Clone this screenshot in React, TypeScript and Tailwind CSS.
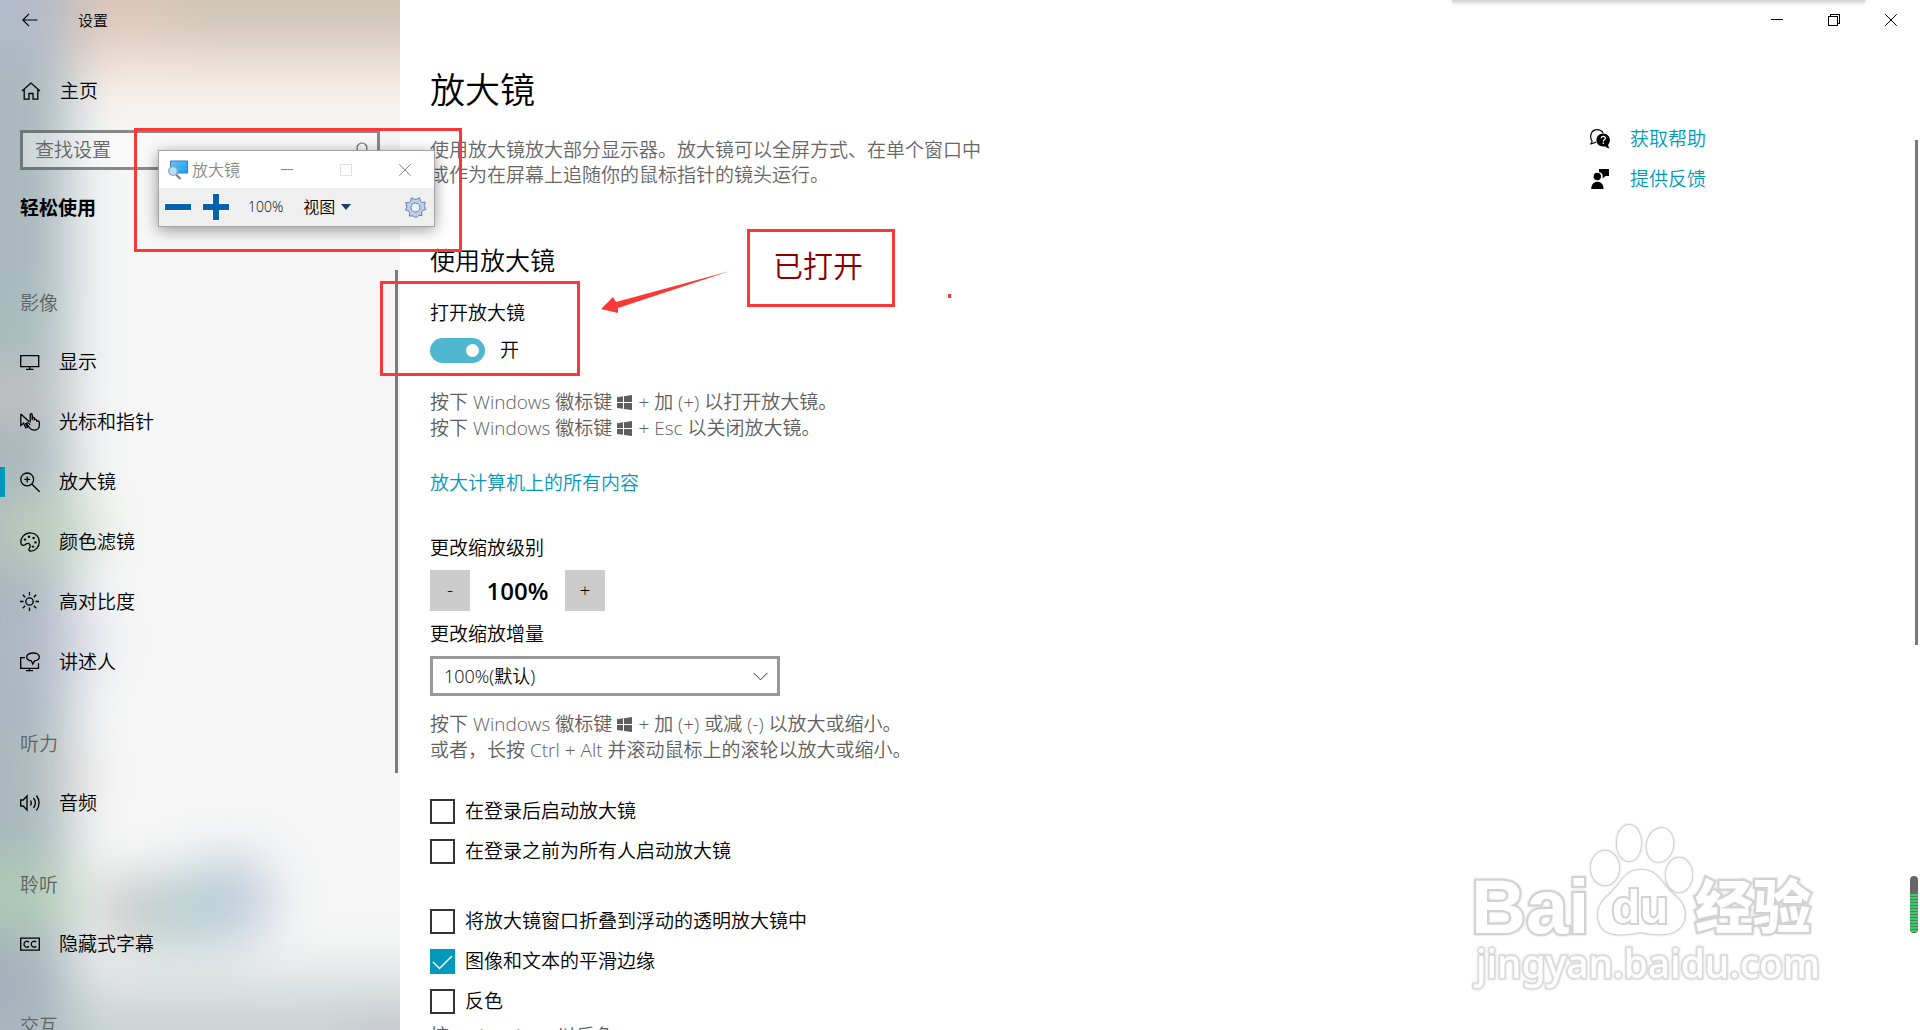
import { useState, type ReactNode } from "react";

type NavItem = { label: string; icon: ReactNode; active?: boolean };
type NavGroup = { title: string; items: NavItem[] };

const LINE = {
  width: 20,
  height: 20,
  viewBox: "0 0 20 20",
  fill: "none",
  stroke: "currentColor",
  strokeWidth: 1.3,
} as const;

const NAV: NavGroup[] = [
  {
    title: "影像",
    items: [
      {
        label: "显示",
        icon: (
          <svg {...LINE}>
            <path d="M.7 3.7h18v11H.7zM6 17.4h7.5M9.700 14.700v2.700" />
          </svg>
        ),
      },
      {
        label: "光标和指针",
        icon: (
          <svg {...LINE}>
            <path d="M.8 2v11.500l2.700-2.400 2.200 4.400M.8 2l8.400 7.800M3.500 11l2.500 4.800 1.500-.8-2-4" />
            <path d="M10.200 10.500V2.800c0-1.400 2-1.400 2 0v5.400M12.200 5.500c1.700-.5 2.200.3 2.200 1v2c0-1.700 2.400-1.500 2.400.3v1c.3-1.500 2.500-1.200 2.500.5v3.200c0 2.700-2.200 4.700-5 4.700-2.700 0-4-1.200-5-2.700l-3-4c1.200-1.400 2.500-.3 3.900 1.200" />
          </svg>
        ),
      },
      {
        label: "放大镜",
        active: true,
        icon: (
          <svg {...LINE}>
            <circle cx="7.200" cy="7.400" r="6.400" />
            <path d="M11.800 12l8 8M7.200 4.400v6M4.200 7.400h6" />
          </svg>
        ),
      },
      {
        label: "颜色滤镜",
        icon: (
          <svg {...LINE}>
            <path d="M10.300.8c5.200 0 9 3.900 9 8.900 0 5.200-3.900 9.500-8.400 9.500-2.200 0-2.400-1.400-1.600-2.700.9-1.500 1.500-2.800.4-4.200-1.300-1.600-2.800-.9-4.200.1-1.800 1.400-4.300 1.500-4.600-1.500C.4 5.500 4.800.8 10.300.8z" />
            <g fill="currentColor" stroke="none">
              <circle cx="5" cy="7.600" r="1.200" />
              <circle cx="9" cy="4.700" r="1.200" />
              <circle cx="13.600" cy="6" r="1.200" />
              <circle cx="15.500" cy="10.400" r="1.200" />
              <circle cx="13" cy="14.600" r="1.200" />
            </g>
          </svg>
        ),
      },
      {
        label: "高对比度",
        icon: (
          <svg {...LINE}>
            <circle cx="9.500" cy="9.500" r="3.700" />
            <path d="M9.500 0v3.500M9.500 15.500V19M0 9.500h3.500M15.500 9.500H19M2.800 2.800l2.400 2.400M13.800 13.800l2.400 2.400M2.800 16.200l2.400-2.400M13.800 5.200l2.400-2.400" />
          </svg>
        ),
      },
      {
        label: "讲述人",
        icon: (
          <svg {...LINE}>
            <path d="M5 5.700H.7v10.600h17.800v-5M6 18.600h7M9.500 16.300v2.300" />
            <path d="M13 1c3.700 0 6.300 1.700 6.300 4 0 2-2 3.500-4.800 3.900L12.800 12l-1.500-3.200C8.500 8.400 6.700 7 6.700 5c0-2.300 2.600-4 6.300-4z" />
          </svg>
        ),
      },
    ],
  },
  {
    title: "听力",
    items: [
      {
        label: "音频",
        icon: (
          <svg {...LINE}>
            <path d="M.7 7v6h2.500l3.800 4V3L3.200 7zM10.500 7.500c1 1.500 1 3.500 0 5M13.500 5c2.300 3 2.300 7 0 10M16.400 2.500c3.600 4.500 3.600 10.500 0 15" />
          </svg>
        ),
      },
    ],
  },
  {
    title: "聆听",
    items: [
      {
        label: "隐藏式字幕",
        icon: (
          <svg {...LINE}>
            <path d="M.7 4.200h18.600v12H.7z" />
            <path d="M9 8c-2.400-1.600-5-.5-5 2.200s2.600 3.800 5 2.200M16.300 8c-2.400-1.600-5-.5-5 2.200s2.600 3.800 5 2.200" />
          </svg>
        ),
      },
    ],
  },
  { title: "交互", items: [] },
];

function TitleButton({
  label,
  width = "w-[57px]",
  children,
}: {
  label: string;
  width?: string;
  children: ReactNode;
}) {
  return (
    <button type="button" aria-label={label} className={`flex h-10 items-center justify-center ${width}`}>
      <svg width="12" height="12" viewBox="0 0 12 12" fill="none" stroke="currentColor" shapeRendering="crispEdges">
        {children}
      </svg>
    </button>
  );
}

function WinKey() {
  return (
    <svg
      width="15"
      height="15"
      viewBox="0 0 15 15"
      fill="currentColor"
      className="mr-[6px] ml-[5px] inline-block align-[-1px]"
      aria-label="Windows"
    >
      <path d="M0 2.200l6-.9v5.800H0zM7 1.200L15 0v7.100H7zM0 8h6v5.800l-6-.9zM7 8h8v7.100l-8-1.200z" />
    </svg>
  );
}

// Blurred wallpaper showing through the side pane
function PaneBackdrop() {
  return (
    <svg
      className="pointer-events-none absolute inset-0 -z-10 size-full"
      viewBox="0 0 400 1030"
      preserveAspectRatio="none"
      aria-hidden="true"
    >
      <defs>
        <filter
          id="acrylic"
          filterUnits="userSpaceOnUse"
          x="-150"
          y="-150"
          width="700"
          height="1330"
          colorInterpolationFilters="sRGB"
        >
          <feGaussianBlur stdDeviation="26" />
        </filter>
      </defs>
      <rect width="400" height="1030" fill="#f6f6f6" />
      <g filter="url(#acrylic)">
        <rect x="-150" y="-150" width="700" height="1330" fill="#f6f6f6" />
        <rect x="-150" y="-150" width="700" height="240" fill="#f3e4da" />
        <rect x="-150" y="-150" width="700" height="195" fill="#cec5b7" />
        <rect x="-150" y="965" width="700" height="220" fill="#dde3e2" />
        <rect x="-150" y="1005" width="700" height="200" fill="#c9d2d1" />
        <rect x="340" y="1005" width="210" height="200" fill="#c4c8cd" />
        <rect x="80" y="-150" width="90" height="195" fill="#dcc5ba" />
        <rect x="-150" y="-150" width="218" height="1330" fill="#a8b8bd" />
        <rect x="-150" y="-150" width="220" height="210" fill="#b3bac9" />
        <ellipse cx="20" cy="325" rx="40" ry="25" fill="#a9bfbd" />
        <ellipse cx="0" cy="395" rx="60" ry="26" fill="#c6c0c0" />
        <ellipse cx="42" cy="530" rx="55" ry="34" fill="#bccfbc" />
        <rect x="-150" y="595" width="214" height="125" fill="#adb6c3" />
        <ellipse cx="75" cy="640" rx="22" ry="42" fill="#d3d6e2" />
        <ellipse cx="60" cy="775" rx="28" ry="20" fill="#cfc9c6" />
        <ellipse cx="15" cy="893" rx="60" ry="38" fill="#aecbb4" />
        <rect x="-150" y="950" width="206" height="60" fill="#a3b0bb" />
        <ellipse cx="145" cy="910" rx="50" ry="34" fill="#c3c5c5" />
        <ellipse cx="230" cy="900" rx="44" ry="44" fill="#c0cbda" />
        <ellipse cx="192" cy="910" rx="28" ry="38" fill="#b0cfd0" />
      </g>
    </svg>
  );
}

function Sidebar() {
  return (
    <aside className="relative isolate flex w-[400px] shrink-0 flex-col overflow-hidden">
      <PaneBackdrop />
      <div className="flex h-10 shrink-0 items-center pl-[22px]">
        <button type="button" aria-label="返回">
          <svg width="16" height="14" viewBox="0 0 16 14" fill="none" stroke="currentColor" strokeWidth="1.200">
            <path d="M15.500 7H1M7 .8L.8 7 7 13.200" />
          </svg>
        </button>
        <span className="ml-10 text-[15px]">设置</span>
      </div>

      <a href="#home" className="mt-[21px] flex h-[60px] shrink-0 items-center pl-[21px]">
        <svg {...LINE}>
          <path d="M1 10l9-8 9 8M3.200 8.500v9.700H8v-5.700h4v5.700h4.800V8.500" />
        </svg>
        <span className="ml-[19px]">主页</span>
      </a>

      <label className="mx-5 mt-[9px] flex h-10 shrink-0 items-center border-3 border-black/45 bg-white/40 pr-2 pl-3">
        <input
          type="text"
          aria-label="查找设置"
          placeholder="查找设置"
          className="min-w-0 flex-1 bg-transparent outline-none placeholder:text-[#666]"
        />
        <svg width="16" height="16" viewBox="0 0 16 16" fill="none" stroke="#666" strokeWidth="1.200">
          <circle cx="9" cy="6" r="5" />
          <path d="M5.500 9.500L1 14" />
        </svg>
      </label>

      <h2 className="mt-[25px] mb-[30px] pl-5 leading-[26px] font-bold">轻松使用</h2>

      <nav>
        {NAV.map((group) => (
          <section key={group.title}>
            <h3 className="pt-10 pb-[17px] pl-5 leading-6 text-[#5c6464]">{group.title}</h3>
            {group.items.map((item) => (
              <a key={item.label} href="#section" className="flex h-[60px] items-center">
                <span className={`h-[30px] w-[5px] ${item.active ? "bg-[#0099bc]" : ""}`} />
                <span className="ml-[15px]">{item.icon}</span>
                <span className="ml-[19px]">{item.label}</span>
              </a>
            ))}
          </section>
        ))}
      </nav>
    </aside>
  );
}

function Check({ label, defaultChecked = false }: { label: string; defaultChecked?: boolean }) {
  return (
    <label className="flex h-[25px] items-center gap-[10px]">
      <span className="grid">
        <input
          type="checkbox"
          defaultChecked={defaultChecked}
          className="peer col-start-1 row-start-1 size-[25px] appearance-none border-2 border-[#333] bg-white checked:border-[#0099bc] checked:bg-[#0099bc]"
        />
        <svg
          width="25"
          height="25"
          viewBox="0 0 25 25"
          fill="none"
          stroke="#fff"
          strokeWidth="1.500"
          className="pointer-events-none invisible col-start-1 row-start-1 peer-checked:visible"
        >
          <path d="M3 13l6.500 6.500L22 7" />
        </svg>
      </span>
      {label}
    </label>
  );
}

function Settings() {
  const [zoom, setZoom] = useState(100);

  return (
    <div className="min-w-0 flex-1 pt-[26px] pl-[30px]">
      <h1 className="text-[35px] leading-[48px]">放大镜</h1>
      <p className="mt-6 leading-[25px] text-[#666]">
        使用放大镜放大部分显示器。放大镜可以全屏方式、在单个窗口中
        <br />
        或作为在屏幕上追随你的鼠标指针的镜头运行。
      </p>

      <h2 className="mt-14 text-[25px] leading-8">使用放大镜</h2>
      <label htmlFor="magnifier-on" className="mt-6 block leading-[26px]">
        打开放大镜
      </label>
      <div className="mt-3 flex h-[25px] items-center gap-[15px]">
        <input
          id="magnifier-on"
          type="checkbox"
          role="switch"
          defaultChecked
          className="flex h-[25px] w-[55px] appearance-none items-center rounded-full bg-[#999] px-[6px] before:size-[13px] before:rounded-full before:bg-white checked:justify-end checked:bg-[#4fb8d0]"
        />
        <span>开</span>
      </div>

      <p className="mt-[26px] leading-[26px] text-[#5e5e5e]">
        按下 Windows 徽标键
        <WinKey />+ 加 (+) 以打开放大镜。
        <br />
        按下 Windows 徽标键
        <WinKey />+ Esc 以关闭放大镜。
      </p>
      <a href="#all" className="mt-[29px] block leading-[26px] text-[#0099bc]">
        放大计算机上的所有内容
      </a>

      <p className="mt-[39px] leading-[26px]">更改缩放级别</p>
      <div className="mt-[9px] flex h-[41px] items-stretch">
        <button
          type="button"
          aria-label="缩小"
          onClick={() => setZoom(Math.max(100, zoom - 100))}
          className="w-10 bg-[#ccc]"
        >
          -
        </button>
        <output className="flex w-[95px] items-center justify-center text-2xl font-semibold">{zoom}%</output>
        <button type="button" aria-label="放大" onClick={() => setZoom(zoom + 100)} className="w-10 bg-[#ccc]">
          +
        </button>
      </div>

      <label htmlFor="increment" className="mt-[10px] block leading-[26px]">
        更改缩放增量
      </label>
      <div className="mt-[9px] grid w-[350px] items-center">
        <select
          id="increment"
          className="col-start-1 row-start-1 h-10 w-full appearance-none border-3 border-[#999] bg-white pl-[11px] text-lg"
        >
          <option>100%(默认)</option>
        </select>
        <svg
          width="15"
          height="9"
          viewBox="0 0 15 9"
          fill="none"
          stroke="#333"
          className="pointer-events-none col-start-1 row-start-1 mr-3 justify-self-end"
        >
          <path d="M.5 .8l7 7 7-7" />
        </svg>
      </div>

      <p className="mt-[15px] leading-[26px] text-[#5e5e5e]">
        按下 Windows 徽标键
        <WinKey />+ 加 (+) 或减 (-) 以放大或缩小。
        <br />
        或者，长按 Ctrl + Alt 并滚动鼠标上的滚轮以放大或缩小。
      </p>

      <div className="mt-9 flex flex-col gap-[15px]">
        <Check label="在登录后启动放大镜" />
        <Check label="在登录之前为所有人启动放大镜" />
      </div>
      <div className="mt-[45px] flex flex-col gap-[15px]">
        <Check label="将放大镜窗口折叠到浮动的透明放大镜中" />
        <Check label="图像和文本的平滑边缘" defaultChecked />
        <Check label="反色" />
      </div>
      <p className="mt-[9px] leading-[26px] text-[#5e5e5e]">按 Ctrl + Alt + I 以反色</p>
    </div>
  );
}

function HelpLinks() {
  return (
    <div className="flex w-[330px] shrink-0 flex-col gap-[14px] pt-[86px] text-[#0099bc]">
      <a href="#help" className="flex items-center gap-5 leading-[26px]">
        <svg width="20" height="20" viewBox="0 0 20 20">
          <path
            d="M6.200 13.200c-1.400.3-3.200 1.400-5.400 1.600 1-1 1.300-2 1.200-3C-1.200 7 1.600.8 7 .7c2.800 0 4.800 1 6 3.400"
            fill="none"
            stroke="#000"
            strokeWidth="1.200"
          />
          <path
            d="M13.200 4.500c3.800 0 6.700 2.900 6.700 6.500 0 2-.7 3.500-1.800 4.700.1 1.400.6 2.700 1.600 3.800-2-.2-3.600-1-4.600-2.200-4.700 1-8.700-2-8.700-6.300 0-3.600 3-6.500 6.800-6.500z"
            fill="#000"
          />
          <path
            d="M11.300 9.300c0-2.600 4-2.400 4-.1 0 1.600-2 1.500-2 3.200M13.300 13.600v1.500"
            fill="none"
            stroke="#fff"
            strokeWidth="1.300"
          />
        </svg>
        获取帮助
      </a>
      <a href="#feedback" className="flex items-center gap-5 leading-[26px]">
        <svg width="20" height="20" viewBox="0 0 20 20" fill="#000">
          <path d="M9 0h10v7h-3.500L12.700 9.500V7C12.700 5 11 3.300 9 3z" />
          <circle cx="7.300" cy="7.500" r="3.700" />
          <path d="M1.200 20c0-9.800 12.400-9.800 12.400 0z" />
        </svg>
        提供反馈
      </a>
    </div>
  );
}

function MagnifierWindow() {
  return (
    <div className="absolute top-[150px] left-[158px] w-[277px] border border-[#a5a5a5] bg-[#efefef] shadow-[0_3px_14px_rgba(0,0,0,0.4)]">
      <div className="flex h-[37px] items-center bg-white pl-[9px] text-base text-[#888]">
        <svg width="20" height="20" viewBox="0 0 20 20">
          <defs>
            <linearGradient id="screen" x1="0" y1="0" x2="1" y2="1">
              <stop offset="0" stopColor="#5cc6ff" />
              <stop offset="1" stopColor="#1c9ef5" />
            </linearGradient>
          </defs>
          <path d="M2.500 1h17v12h-17z" fill="url(#screen)" stroke="#3d7fae" />
          <path d="M8 14.500l4.500 4.500" stroke="#6f7f8c" strokeWidth="2.200" />
          <circle cx="5" cy="11" r="4.300" fill="#b9e2f8" stroke="#8fa6b5" strokeWidth="1.300" />
        </svg>
        <span className="ml-1">放大镜</span>
        <div className="ml-auto flex">
          <TitleButton label="最小化放大镜" width="w-[59px]">
            <path d="M0 5.500h12" />
          </TitleButton>
          <TitleButton label="最大化放大镜" width="w-[59px]">
            <path d="M.5.5h11v11H.5z" stroke="#e2e2e2" />
          </TitleButton>
          <TitleButton label="关闭放大镜" width="w-[59px]">
            <path d="M.3.3l11.400 11.400M11.700.3L.3 11.700" shapeRendering="auto" />
          </TitleButton>
        </div>
      </div>
      <div className="flex h-[38px] items-center pl-[5px] text-[15px]">
        <button type="button" aria-label="缩小视图">
          <svg width="28" height="28" viewBox="0 0 28 28">
            <path d="M0 10h28v8H0z" fill="#fff" />
            <path d="M1 11h26v6H1z" fill="#0063b1" />
          </svg>
        </button>
        <button type="button" aria-label="放大视图" className="ml-[10px]">
          <svg width="28" height="28" viewBox="0 0 28 28">
            <path d="M10 0h8v10h10v8H18v10h-8V18H0v-8h10z" fill="#fff" />
            <path d="M11 1h6v10h10v6H17v10h-6V17H1v-6h10z" fill="#0063b1" />
          </svg>
        </button>
        <span className="ml-[18px] text-sm">100%</span>
        <button type="button" className="ml-5 flex items-center gap-[6px] text-base">
          视图
          <svg width="10" height="6" viewBox="0 0 10 6">
            <path d="M0 0h10L5 6z" fill="#1b3c6e" />
          </svg>
        </button>
        <button type="button" aria-label="选项" className="mr-2 ml-auto">
          <svg width="21" height="21" viewBox="0 0 21 21" fill="#bcd0ea" stroke="#6580a5" strokeLinejoin="round">
            <path
              fillRule="evenodd"
              d="M6.500.8l3 1.500h2l3-1.500 1 3.400 1.300 1.300 3.400-.5-.6 3.500-.1 1 1.200 3-3.200 1-1 1.500.6 3.500-3.300-.1-1.800 1.800-1.500.1L8 18.900l-3.700.1.400-3.600-1-1.400-3.200-1 1.400-3-.2-1L.8 5.500l3.500.2 1.200-1.500zM10.500 6a4.500 4.500 0 100 9 4.500 4.500 0 000-9z"
            />
          </svg>
        </button>
      </div>
    </div>
  );
}

function Annotations() {
  return (
    <div className="pointer-events-none">
      <div className="absolute top-[128px] left-[134px] h-[124px] w-[328px] border-3 border-[#fb3838]" />
      <div className="absolute top-[281px] left-[380px] h-[95px] w-[200px] border-3 border-[#fb3838]" />
      <svg className="absolute top-[270px] left-[600px]" width="130" height="45" viewBox="0 0 130 45" fill="#fb3838">
        <path d="M130 1L16 32l-3-5L1 39l17 4 0-5z" />
      </svg>
      <div className="absolute top-[229px] left-[747px] flex h-[78px] w-[148px] items-center justify-center border-3 border-[#fb3838] pr-[6px] pb-[6px] text-[30px] text-[#8b0000]">
        已打开
      </div>
      <div className="absolute top-[294px] left-[948px] h-1 w-[3px] bg-[#fb3838]" />
    </div>
  );
}

function Watermark() {
  return (
    <svg
      className="pointer-events-none absolute right-[90px] bottom-[35px] drop-shadow-[0_0_1px_#ccc]"
      width="370"
      height="180"
      viewBox="0 0 370 180"
      fill="#fff"
      stroke="#d2d2d2"
      strokeWidth="2"
      paintOrder="stroke"
    >
      <text x="11" y="118" fontSize="76" fontWeight="700" strokeWidth="4" className="font-['Liberation_Sans',sans-serif]">
        Bai
      </text>
      <ellipse cx="145" cy="53" rx="14" ry="17" />
      <ellipse cx="169" cy="28" rx="12" ry="18" />
      <ellipse cx="200" cy="30" rx="13" ry="17" transform="rotate(12 200 30)" />
      <ellipse cx="219" cy="60" rx="13" ry="17" />
      <path d="M181 55c-17 0-19 14-32 25-11 9-13 20-9 29 5 12 20 12 41 8 24 5 39 2 43-12 2-9 0-16-9-24-15-13-17-26-34-26z" />
      <text x="152" y="108" fontSize="46" fontWeight="700" strokeWidth="4" className="font-['Liberation_Sans',sans-serif]">
        du
      </text>
      <text x="235" y="113" fontSize="58" fontWeight="900" strokeWidth="4" className="font-['Noto_Sans_CJK_SC',sans-serif]">
        经验
      </text>
      <text x="16" y="163" fontSize="39" fontWeight="500" stroke="#dadada" strokeWidth="3" className="font-['Noto_Sans',sans-serif]">
        jingyan.baidu.com
      </text>
    </svg>
  );
}

export default function App() {
  return (
    <div className="relative flex h-screen overflow-hidden bg-white font-['Open_Sans','Noto_Sans_CJK_SC',sans-serif] text-[19px] font-[350] text-black">
      <Sidebar />
      <main className="flex min-w-0 flex-1 flex-col">
        <header className="flex h-10 shrink-0 justify-end pr-px">
          <TitleButton label="最小化">
            <path d="M0 5.500h12" />
          </TitleButton>
          <TitleButton label="还原">
            <path d="M.5 2.500h9v9h-9zM2.500 2.500v-2h9v9h-2" />
          </TitleButton>
          <TitleButton label="关闭">
            <path d="M.3.3l11.400 11.400M11.700.3L.3 11.700" shapeRendering="auto" />
          </TitleButton>
        </header>
        <div className="flex min-h-0 flex-1">
          <Settings />
          <HelpLinks />
        </div>
      </main>

      {/* Scroll thumbs */}
      <div className="absolute top-[270px] left-[395px] h-[503px] w-[3px] bg-[#7a7a7a]" />
      <div className="absolute top-[140px] right-[2px] h-[505px] w-[3px] bg-[#7a7a7a]" />

      <div className="absolute top-0 right-[55px] h-[2px] w-[413px] bg-[#d6d6d6] shadow-[0_0_4px_#aaa]" />
      <div className="absolute right-[2px] bottom-[97px] flex h-[57px] w-2 flex-col justify-end overflow-hidden rounded-full bg-[#666]">
        <div className="h-[39px] bg-[repeating-linear-gradient(to_bottom,#3fc96c_0px,#3fc96c_2px,#5b7a62_2px,#5b7a62_3px)]" />
      </div>

      <Watermark />
      <MagnifierWindow />
      <Annotations />
    </div>
  );
}
